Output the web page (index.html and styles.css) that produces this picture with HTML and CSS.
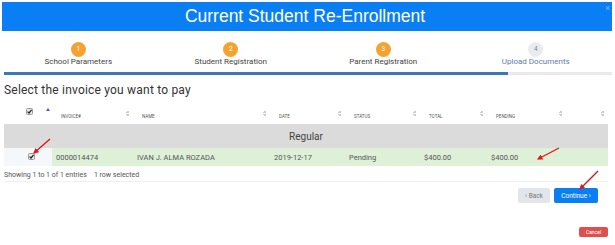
FILE: index.html
```html
<!DOCTYPE html>
<html lang="en">
<head>
    <meta charset="UTF-8">
    <title>Current Student Re-Enrollment</title>
    <link rel="stylesheet" href="styles.css">
</head>
<body>
    <div class="modal">
        <div class="modal-header">
            <h1>Current Student Re-Enrollment</h1>
            <span class="close">&times;</span>
        </div>

        <div class="steps">
            <div class="step done"><span class="num">1</span><span class="label">School Parameters</span></div>
            <div class="step done"><span class="num">2</span><span class="label">Student Registration</span></div>
            <div class="step done"><span class="num">3</span><span class="label">Parent Registration</span></div>
            <div class="step current"><span class="num">4</span><span class="label">Upload Documents</span></div>
        </div>
        <div class="progress"><div class="progress-fill"></div></div>

        <h2>Select the invoice you want to pay</h2>

        <table class="invoices">
            <colgroup>
                <col style="width: 48px">
                <col style="width: 81px">
                <col style="width: 137px">
                <col style="width: 75px">
                <col style="width: 75px">
                <col style="width: 67px">
                <col style="width: 79px">
                <col style="width: 42px">
            </colgroup>
            <thead>
                <tr>
                    <th class="check-col">
                        <span class="cb"><svg viewBox="0 0 7 7" width="7" height="7"><rect x="0.5" y="0.5" width="6" height="6" rx="1" fill="#e8e8e8" stroke="#9a9a9a"/><path d="M1.6 3.6 L3 5 L5.6 1.8" fill="none" stroke="#222" stroke-width="1.2"/></svg></span>
                        <span class="sort-asc"><svg viewBox="0 0 4 3" width="4" height="3"><path d="M0 3 L2 0 L4 3 z" fill="#4a5bd0"/></svg></span>
                    </th>
                    <th>INVOICE#<span class="sort"></span></th>
                    <th>NAME<span class="sort"></span></th>
                    <th>DATE<span class="sort"></span></th>
                    <th>STATUS<span class="sort"></span></th>
                    <th>TOTAL<span class="sort"></span></th>
                    <th>PENDING<span class="sort"></span></th>
                    <th><span class="sort"></span></th>
                </tr>
            </thead>
            <tbody>
                <tr class="group">
                    <td colspan="8">Regular</td>
                </tr>
                <tr class="selected">
                    <td class="check-cell"><span class="cb"><svg viewBox="0 0 7 7" width="7" height="7"><rect x="0.5" y="0.5" width="6" height="6" rx="1" fill="#e8e8e8" stroke="#9a9a9a"/><path d="M1.6 3.6 L3 5 L5.6 1.8" fill="none" stroke="#222" stroke-width="1.2"/></svg></span></td>
                    <td>0000014474</td>
                    <td>IVAN J. ALMA ROZADA</td>
                    <td>2019-12-17</td>
                    <td>Pending</td>
                    <td>$400.00</td>
                    <td>$400.00</td>
                    <td></td>
                </tr>
            </tbody>
        </table>

        <div class="table-info">Showing 1 to 1 of 1 entries<span class="selected-info">1 row selected</span></div>

        <div class="actions">
            <button class="btn btn-back">&lsaquo; Back</button>
            <button class="btn btn-continue">Continue &rsaquo;</button>
        </div>

        <div class="footer">
            <button class="btn btn-cancel">Cancel</button>
        </div>
    </div>

    <!-- annotation arrows drawn over the screenshot -->
    <svg class="annotations" width="615" height="245" viewBox="0 0 615 245">
        <defs>
            <marker id="head" viewBox="0 0 10 10" refX="8" refY="5" markerWidth="4" markerHeight="4" orient="auto">
                <path d="M0 0 L10 5 L0 10 z" fill="#e3161b"/>
            </marker>
        </defs>
        <line x1="50" y1="139" x2="34" y2="153" stroke="#e3161b" stroke-width="1.4" marker-end="url(#head)"/>
        <line x1="559" y1="148" x2="538" y2="159" stroke="#e3161b" stroke-width="1.4" marker-end="url(#head)"/>
        <line x1="598" y1="171" x2="580" y2="189" stroke="#e3161b" stroke-width="1.4" marker-end="url(#head)"/>
    </svg>
</body>
</html>
```

FILE: styles.css
```css
body {
    margin: 0;
    font-family: Roboto, "Liberation Sans", Arial, sans-serif;
    background-color: white;
    color: #444;
}
.modal {
    width: 610px;
    margin: 2px 0 0 2px;
}
.modal-header {
    position: relative;
    background-color: #0a7ff4;
    height: 29px;
    display: flex;
    align-items: center;
    justify-content: center;
}
.modal-header h1 {
    margin: 0 4px 0 0;
    color: white;
    font-family: "Liberation Sans", Arial, sans-serif;
    font-weight: normal;
    font-size: 17.5px;
}
.close {
    position: absolute;
    top: 1px;
    right: 2px;
    font-size: 9px;
    color: #7fb6f0;
}
.steps {
    display: grid;
    grid-template-columns: repeat(4, 1fr);
    padding-top: 11px;
}
.step {
    display: flex;
    flex-direction: column;
    align-items: center;
}
.num {
    width: 15px;
    height: 15px;
    border-radius: 50%;
    background-color: #f4a333;
    color: white;
    font-size: 6.5px;
    line-height: 15px;
    text-align: center;
}
.current .num {
    background-color: #e9ecef;
    color: #7b8a99;
}
.label {
    font-size: 8px;
    line-height: 10px;
    color: #444;
}
.current .label {
    color: #5e7ea6;
}
.progress {
    margin: 5px 0 0 2px;
    height: 3px;
    background-color: #e9e9e9;
}
.progress-fill {
    width: 504px;
    height: 3px;
    background-color: #3b78b8;
}
h2 {
    margin: 7px 0 0 2px;
    font-size: 12px;
    line-height: 16px;
    font-weight: normal;
    color: #333;
    letter-spacing: 0.2px;
}
.invoices {
    margin: 1px 0 0 2px;
    width: 604px;
    border-collapse: collapse;
    table-layout: fixed;
}
.invoices th {
    height: 18px;
    padding: 0 0 4px 9px;
    text-align: left;
    vertical-align: bottom;
    font-size: 4.5px;
    line-height: 6px;
    font-weight: normal;
    color: #555;
    position: relative;
}
.invoices th.check-col {
    padding: 0 0 7px 0;
}
.check-col .cb {
    margin-left: 22px;
}
.sort-asc {
    display: inline-block;
    line-height: 0;
    margin-left: 12px;
    vertical-align: 4px;
}
.sort {
    position: absolute;
    right: 4px;
    bottom: 7px;
    width: 3px;
    height: 7px;
    background:
        linear-gradient(to bottom right, transparent 50%, #ccc 50%) left top / 2px 3px no-repeat,
        linear-gradient(to bottom left, transparent 50%, #ccc 50%) right top / 1.5px 3px no-repeat,
        linear-gradient(to top right, transparent 50%, #ccc 50%) left bottom / 2px 3px no-repeat,
        linear-gradient(to top left, transparent 50%, #ccc 50%) right bottom / 1.5px 3px no-repeat;
}
.cb {
    display: inline-block;
    width: 7px;
    height: 7px;
    line-height: 0;
}
.group td {
    height: 24px;
    padding: 0;
    background-color: #dbdbdb;
    text-align: center;
    font-size: 10px;
    color: #444;
}
.selected td {
    height: 18px;
    padding: 0 0 0 4px;
    background-color: #dff0d8;
    font-size: 7.5px;
    color: #555;
}
.selected td.check-cell {
    background-color: #f5f8fb;
    padding: 0 0 0 24px;
}
.table-info {
    margin: 5px 0 0 2px;
    padding-bottom: 2px;
    width: 604px;
    border-bottom: 1px solid #f1f1f1;
    font-size: 7px;
    color: #555;
}
.selected-info {
    margin-left: 7px;
}
.actions {
    display: flex;
    justify-content: flex-end;
    gap: 4px;
    margin-top: 6px;
    padding-right: 14px;
}
.btn {
    border: none;
    border-radius: 2px;
    font-family: Roboto, Arial, sans-serif;
    padding: 0;
    cursor: pointer;
}
.btn-back {
    width: 32px;
    height: 15px;
    background-color: #e2e6ea;
    color: #777;
    font-size: 6.5px;
}
.btn-continue {
    width: 44px;
    height: 15px;
    background-color: #0a7ff4;
    color: white;
    font-size: 6.5px;
}
.footer {
    display: flex;
    justify-content: flex-end;
    margin-top: 24px;
    padding-right: 4px;
}
.btn-cancel {
    width: 29px;
    height: 10px;
    background-color: #e04f4f;
    color: white;
    font-size: 5px;
}
.annotations {
    position: absolute;
    top: 0;
    left: 0;
    pointer-events: none;
}
```
